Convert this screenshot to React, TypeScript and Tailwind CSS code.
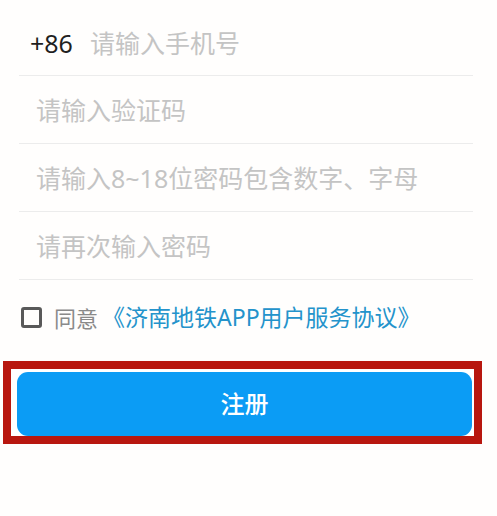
import React from "react";

const font = { fontFamily: '"Noto Sans", "Noto Sans CJK SC", sans-serif' };

export default function App() {
  return (
    <div
      className="w-[497px] h-[516px] bg-[#fffefd] overflow-hidden"
      style={font}
    >
      <div className="ml-[19px] pt-[8px] w-[454px]">
        <div className="h-[68px] border-b border-[#ececec] flex items-center pl-[11px] pt-[4px]">
          <span className="text-[25px] text-[#1f1f1f] leading-none">+86</span>
          <span className="text-[25px] text-[#c4c4c4] leading-none ml-[17px]">
            请输入手机号
          </span>
        </div>
        <div className="h-[68px] border-b border-[#ececec] flex items-center pl-[17px] pt-[2px]">
          <span className="text-[25px] text-[#c4c4c4] leading-none">请输入验证码</span>
        </div>
        <div className="h-[68px] border-b border-[#ececec] flex items-center pl-[17px] pt-[2px]">
          <span className="text-[25px] text-[#c4c4c4] leading-none">
            请输入8~18位密码包含数字、字母
          </span>
        </div>
        <div className="h-[68px] border-b border-[#ececec] flex items-center pl-[17px] pt-[2px]">
          <span className="text-[25px] text-[#c4c4c4] leading-none">请再次输入密码</span>
        </div>
      </div>
      <div className="flex items-center h-[81px] pl-[21px] pb-[6px]">
        <div className="w-[21px] h-[21px] border-[3px] border-[#595959] rounded-[3px]" />
        <span className="ml-[12px] text-[22px] text-[#8a8a8a] leading-none">同意</span>
        <span className="ml-[4px] text-[23px] text-[#2493cb] leading-none">
          《济南地铁APP用户服务协议》
        </span>
      </div>
      <div className="ml-[3px] w-[479px] h-[83px] border-[8px] border-[#b8170f] bg-white pl-[6px] pr-[2px] pt-[3px]">
        <button className="w-[455px] h-[64px] rounded-[11px] bg-[#0b9cf5] text-white text-[24px] font-medium flex items-center justify-center leading-none">
          注册
        </button>
      </div>
    </div>
  );
}
